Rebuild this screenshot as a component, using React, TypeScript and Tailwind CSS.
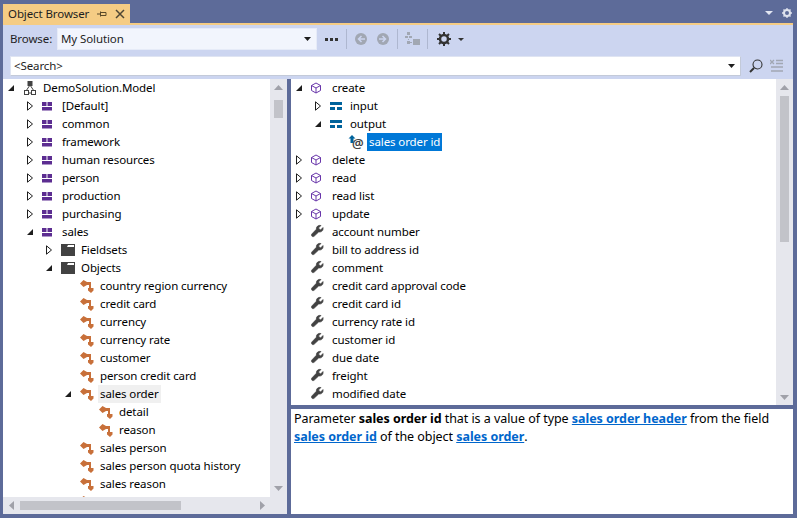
import type { ReactNode } from "react"

type Kind = "solution" | "module" | "folder" | "object" | "method" | "struct" | "field" | "param"
type Node = { label: string; level: number; kind: Kind; arrow?: "open" | "closed"; state?: "selected" | "hover" }

const leftTree: Node[] = [
  { label: "DemoSolution.Model", level: 0, kind: "solution", arrow: "open" },
  { label: "[Default]", level: 1, kind: "module", arrow: "closed" },
  { label: "common", level: 1, kind: "module", arrow: "closed" },
  { label: "framework", level: 1, kind: "module", arrow: "closed" },
  { label: "human resources", level: 1, kind: "module", arrow: "closed" },
  { label: "person", level: 1, kind: "module", arrow: "closed" },
  { label: "production", level: 1, kind: "module", arrow: "closed" },
  { label: "purchasing", level: 1, kind: "module", arrow: "closed" },
  { label: "sales", level: 1, kind: "module", arrow: "open" },
  { label: "Fieldsets", level: 2, kind: "folder", arrow: "closed" },
  { label: "Objects", level: 2, kind: "folder", arrow: "open" },
  { label: "country region currency", level: 3, kind: "object" },
  { label: "credit card", level: 3, kind: "object" },
  { label: "currency", level: 3, kind: "object" },
  { label: "currency rate", level: 3, kind: "object" },
  { label: "customer", level: 3, kind: "object" },
  { label: "person credit card", level: 3, kind: "object" },
  { label: "sales order", level: 3, kind: "object", arrow: "open", state: "hover" },
  { label: "detail", level: 4, kind: "object" },
  { label: "reason", level: 4, kind: "object" },
  { label: "sales person", level: 3, kind: "object" },
  { label: "sales person quota history", level: 3, kind: "object" },
  { label: "sales reason", level: 3, kind: "object" },
  { label: "sales territory", level: 3, kind: "object" },
]

const rightTree: Node[] = [
  { label: "create", level: 0, kind: "method", arrow: "open" },
  { label: "input", level: 1, kind: "struct", arrow: "closed" },
  { label: "output", level: 1, kind: "struct", arrow: "open" },
  { label: "sales order id", level: 2, kind: "param", state: "selected" },
  { label: "delete", level: 0, kind: "method", arrow: "closed" },
  { label: "read", level: 0, kind: "method", arrow: "closed" },
  { label: "read list", level: 0, kind: "method", arrow: "closed" },
  { label: "update", level: 0, kind: "method", arrow: "closed" },
  { label: "account number", level: 0, kind: "field" },
  { label: "bill to address id", level: 0, kind: "field" },
  { label: "comment", level: 0, kind: "field" },
  { label: "credit card approval code", level: 0, kind: "field" },
  { label: "credit card id", level: 0, kind: "field" },
  { label: "currency rate id", level: 0, kind: "field" },
  { label: "customer id", level: 0, kind: "field" },
  { label: "due date", level: 0, kind: "field" },
  { label: "freight", level: 0, kind: "field" },
  { label: "modified date", level: 0, kind: "field" },
]

function TreeIcon({ kind }: { kind: Kind }) {
  if (kind === "solution")
    return (
      <svg width="16" height="16" viewBox="0 0 16 16" fill="none" stroke="#424242">
        <rect x="6" y="1.5" width="4" height="4" fill="#424242" />
        <path d="M8 5 4 11M8 5l4 6M5 13h6" />
        <rect x="2.500" y="10.500" width="4" height="4" fill="#fff" />
        <rect x="9.500" y="10.500" width="4" height="4" fill="#fff" />
      </svg>
    )
  if (kind === "module")
    return (
      <svg width="16" height="16" viewBox="0 0 16 16" fill="#5c2d91">
        <path d="M1 4h4.500v4H1zM6.500 4H11v4H6.500zM1 9h10v3.500H1z" />
      </svg>
    )
  if (kind === "folder")
    return (
      <svg width="16" height="16" viewBox="0 0 16 16">
        <path d="M1 2h14v12H1z" fill="#424242" />
        <path d="M8 3h6v2H7z" fill="#fff" />
      </svg>
    )
  if (kind === "object")
    return (
      <svg width="16" height="16" viewBox="0 0 16 16" fill="#c8703a">
        <path d="M1 5.500 4.500 2 8 4h4v3H8L4.500 9z" />
        <path d="M10 7h2v4h-2z" />
        <path d="M9 10h5.500v2.500L12 15l-3-2.500z" />
      </svg>
    )
  if (kind === "method")
    return (
      <svg width="16" height="16" viewBox="0 0 16 16" fill="none" stroke="#6936aa">
        <path d="M5 3 9.500 5.500v5L5 13 .5 10.500v-5zM.5 5.500 5 8l4.500-2.500M5 8v5" />
      </svg>
    )
  if (kind === "struct")
    return (
      <svg width="16" height="16" viewBox="0 0 16 16" fill="#00639c">
        <path d="M1 4h12v3H1zM1 9h5v3H1zM8 9h5v3H8z" />
      </svg>
    )
  if (kind === "field")
    return (
      <svg width="16" height="16" viewBox="0 0 16 16">
        <path
          d="M12 3.500 9.500 6 7.500 4 10 1.500C7.500.8 5 2.500 5.300 5.300L.8 10c-1.300 1.500.8 3.500 2.300 2.300L7.700 8C10.500 8.500 12.700 6.500 12 3.500z"
          fill="#424242"
          stroke="#424242"
          stroke-width="0.6"
        />
      </svg>
    )
  return (
    <span className="relative block w-4 h-4">
      <span className="absolute left-[4px] top-[3px] text-[13px] leading-[13px] font-semibold tracking-normal text-[#424242]">@</span>
      <svg width="16" height="16" viewBox="0 0 16 16" className="absolute inset-0">
        <path d="M4 1 7.500 4.500H5.500V9h-3V4.500H.5z" fill="#00639c" />
      </svg>
    </span>
  )
}

function Arrow({ type }: { type?: "open" | "closed" }) {
  if (!type) return <span className="w-4 shrink-0" />
  return (
    <span className="w-4 h-4 shrink-0 flex items-center justify-center">
      {type === "open" ? (
        <svg width="8" height="8" viewBox="0 0 8 8">
          <path d="M7 1v6H1z" fill="#1e1e1e" />
        </svg>
      ) : (
        <svg width="8" height="10" viewBox="0 0 8 10">
          <path d="M1.500.8v8.400L6.500 5z" fill="#fff" stroke="#1e1e1e" />
        </svg>
      )}
    </span>
  )
}

function TreeRow({ node, gap }: { node: Node; gap: number }) {
  const labelClass =
    node.state === "selected"
      ? "bg-[#0078d7] text-white"
      : node.state === "hover"
        ? "bg-[#f0f0f0] text-black"
        : "text-black"
  return (
    <div className="h-[18px] flex items-center shrink-0 whitespace-nowrap" style={{ paddingLeft: node.level * 19 }}>
      <Arrow type={node.arrow} />
      <span className="w-4 h-4 shrink-0" style={{ marginLeft: gap }}>
        <TreeIcon kind={node.kind} />
      </span>
      <span className={`ml-[3px] h-[18px] px-[2px] leading-[18px] ${labelClass}`}>{node.label}</span>
    </div>
  )
}

function VScroll({ thumb, className }: { thumb: string; className: string }) {
  return (
    <div className={`w-[17px] shrink-0 bg-[#e6e7ed] flex flex-col items-center ${className}`}>
      <svg width="9" height="5" viewBox="0 0 9 5" className="mt-[6px] shrink-0">
        <path d="M4.500 0 9 5H0z" fill="#a0a1a9" />
      </svg>
      <div className={`w-[9px] bg-[#c2c3c9] shrink-0 ${thumb}`} />
      <div className="flex-1" />
      <svg width="9" height="5" viewBox="0 0 9 5" className="shrink-0">
        <path d="M0 0h9L4.500 5z" fill="#a0a1a9" />
      </svg>
    </div>
  )
}

function Sep() {
  return <span className="w-px h-[20px] bg-[#aeb7d0] shrink-0" />
}

function LinkText({ children }: { children: ReactNode }) {
  return <span className="font-bold text-[#0066cc] underline">{children}</span>
}

export default function App() {
  return (
    <div className="w-[797px] h-[518px] bg-[#5d6b99] flex flex-col overflow-hidden text-[11.5px] font-['Noto_Sans',sans-serif] tracking-[-0.1px]">
      {/* Tab strip */}
      <div className="h-[23px] pt-[4px] pl-[3px] pr-[5px] flex items-start shrink-0">
        <div className="w-[127px] h-[19px] bg-[#f5cc84] flex items-center pl-[5px] text-[#1e1e1e]">
          <span className="w-[89px]">Object Browser</span>
          <svg width="10" height="10" viewBox="0 0 10 10" className="shrink-0" fill="none" stroke="#5a4a2a">
            <path d="M0 5h3M3.500 2.500v5M3.500 3.500h5.500v3h-5.500" />
          </svg>
          <svg width="10" height="10" viewBox="0 0 10 10" className="ml-[8px] shrink-0" fill="none" stroke="#4f4634" stroke-width="1.500">
            <path d="M1 1l8 8M9 1 1 9" />
          </svg>
        </div>
        <div className="flex-1" />
        <div className="h-[18px] flex items-center gap-[9px]">
          <svg width="8" height="4" viewBox="0 0 8 4">
            <path d="M0 0h8L4 4z" fill="#e2e6f2" />
          </svg>
          <svg width="10" height="10" viewBox="0 0 10 10">
            <circle cx="5" cy="5" r="3" fill="none" stroke="#dfe3ee" stroke-width="2" />
            <path d="M5 0v2M5 8v2M0 5h2M8 5h2M1.500 1.500l1.200 1.200M7.300 7.300l1.200 1.200M8.500 1.500 7.300 2.700M2.700 7.300 1.500 8.500" stroke="#dfe3ee" stroke-width="1.300" />
          </svg>
        </div>
      </div>

      <div className="flex-1 ml-[3px] mb-[4px] mr-[4px] flex flex-col min-h-0">
        <div className="h-[2px] bg-[#f5cc84] shrink-0" />

        {/* Toolbars */}
        <div className="bg-[#ccd5f0] shrink-0 text-[#1e1e1e] pt-[3px] pb-[3px]">
          <div className="h-[22px] flex items-center pl-[7px]">
            <span className="w-[47px]">Browse:</span>
            <div className="w-[260px] h-[22px] bg-[#f2f5fd] border border-[#e6ebf8] flex items-center pl-[3px] pr-[5px] justify-between">
              <span>My Solution</span>
              <svg width="7" height="4" viewBox="0 0 7 4">
                <path d="M0 0h7L3.500 4z" fill="#1e1e1e" />
              </svg>
            </div>
            <span className="ml-[8px] w-[13px] flex gap-[2px] shrink-0">
              <i className="w-[3px] h-[3px] bg-[#333]" />
              <i className="w-[3px] h-[3px] bg-[#333]" />
              <i className="w-[3px] h-[3px] bg-[#333]" />
            </span>
            <span className="ml-[8px] flex"><Sep /></span>
            <svg width="12" height="12" viewBox="0 0 12 12" className="ml-[8px]">
              <circle cx="6" cy="6" r="6" fill="#a1a7b3" />
              <path d="M6.500 3 3.500 6l3 3M3.500 6H10" fill="none" stroke="#ccd5f0" stroke-width="1.500" />
            </svg>
            <svg width="12" height="12" viewBox="0 0 12 12" className="ml-[10px]">
              <circle cx="6" cy="6" r="6" fill="#a1a7b3" />
              <path d="M5.500 3l3 3-3 3M8.500 6H2" fill="none" stroke="#ccd5f0" stroke-width="1.500" />
            </svg>
            <span className="ml-[8px] flex"><Sep /></span>
            <svg width="15" height="15" viewBox="0 0 15 15" className="ml-[7px]" fill="#a1a7b3">
              <path d="M2 0h3v3H2zM0 4h3v2H0zM4 4h3v2H4zM3 7h1v1H3zM2 9h3v3H2zM8 7h7v6H8zM5 10h2v1H5z" />
            </svg>
            <span className="ml-[7px] flex"><Sep /></span>
            <svg width="14" height="14" viewBox="0 0 14 14" className="ml-[9px]">
              <circle cx="7" cy="7" r="4" fill="none" stroke="#333" stroke-width="2.500" />
              <path d="M7 0v3M7 11v3M0 7h3M11 7h3M2 2l2 2M10 10l2 2M12 2l-2 2M4 10l-2 2" stroke="#333" stroke-width="2" />
            </svg>
            <svg width="6" height="3" viewBox="0 0 6 3" className="ml-[7px]">
              <path d="M0 0h6L3 3z" fill="#333" />
            </svg>
          </div>
          <div className="h-[20px] mt-[6px] ml-[7px] flex items-center">
            <div className="w-[731px] h-[20px] bg-white border-t border-l border-[#dfe4f2] border-r-[#c3cad9] border-b-[#c3cad9] border-r border-b flex items-center pl-[3px] pr-[5px] justify-between">
              <span>&lt;Search&gt;</span>
              <svg width="7" height="4" viewBox="0 0 7 4">
                <path d="M0 0h7L3.500 4z" fill="#1e1e1e" />
              </svg>
            </div>
            <svg width="14" height="14" viewBox="0 0 14 14" className="ml-[8px] shrink-0" fill="none" stroke="#333">
              <circle cx="8.500" cy="5.500" r="4.500" stroke-width="1.100" />
              <path d="M5 9l-4 4" stroke-width="2" />
            </svg>
            <svg width="14" height="14" viewBox="0 0 14 14" className="ml-[7px] shrink-0" fill="none" stroke="#a1a7b3">
              <path d="M0 1l4 4M4 1 0 5" stroke-width="1.300" />
              <path d="M6 1.500h7M6 4.500h7M1 8h12M1 12h12" stroke-width="1.500" />
            </svg>
          </div>
        </div>

        {/* Panels */}
        <div className="flex-1 min-h-0 flex gap-[4px]">
          <div className="w-[284px] shrink-0 flex min-h-0 bg-[#e6e7ed]">
            <div className="w-[267px] shrink-0 flex flex-col min-h-0">
              <div className="flex-1 min-h-0 bg-white overflow-hidden flex flex-col">
                {leftTree.map((n) => (
                  <TreeRow key={n.label} node={n} gap={3} />
                ))}
              </div>
              <div className="h-[17px] shrink-0 flex items-center pl-[6px] pr-[5px]">
                <svg width="5" height="9" viewBox="0 0 5 9" className="shrink-0">
                  <path d="M5 0v9L0 4.500z" fill="#a0a1a9" />
                </svg>
                <div className="ml-[6px] w-[161px] h-[9px] bg-[#c2c3c9]" />
                <div className="flex-1" />
                <svg width="5" height="9" viewBox="0 0 5 9" className="shrink-0">
                  <path d="M0 0v9l5-4.500z" fill="#a0a1a9" />
                </svg>
              </div>
            </div>
            <VScroll thumb="mt-[10px] h-[18px]" className="pb-[23px]" />
          </div>

          <div className="flex-1 min-w-0 flex flex-col gap-[4px]">
            <div className="h-[326px] shrink-0 flex bg-white">
              <div className="flex-1 min-w-0 overflow-hidden flex flex-col">
                {rightTree.map((n) => (
                  <TreeRow key={n.label} node={n} gap={n.level === 0 ? 4 : 3} />
                ))}
              </div>
              <VScroll thumb="mt-[6px] h-[146px]" className="pb-[5px]" />
            </div>
            <div className="flex-1 bg-white pl-[3px] pr-[4px] pt-[1px] leading-[18px] text-[12.5px] tracking-[-0.05px] text-black">
              Parameter <b>sales order id</b> that is a value of type <LinkText>sales order header</LinkText> from the field
              <br />
              <LinkText>sales order id</LinkText> of the object <LinkText>sales order</LinkText>.
            </div>
          </div>
        </div>
      </div>
    </div>
  )
}
